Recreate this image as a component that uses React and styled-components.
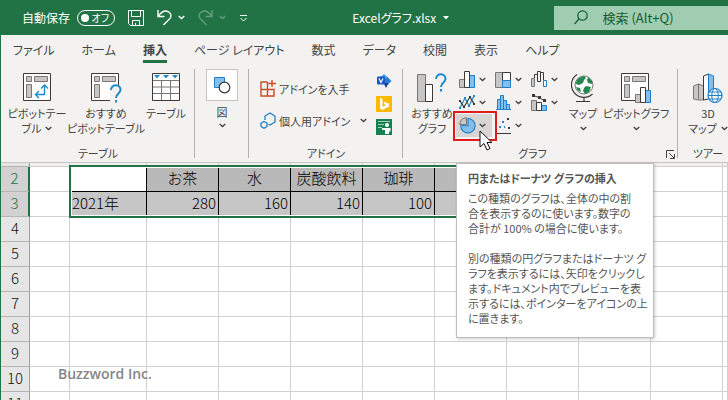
import React from 'react';
import styled, { createGlobalStyle, css } from 'styled-components';

const GlobalStyle = createGlobalStyle`
  * {
    box-sizing: border-box;
  }
  body {
    margin: 0;
    background: #fff;
    color: #444;
    font-family: 'Noto Sans CJK JP', sans-serif;
    font-feature-settings: 'palt';
    font-size: 12px;
    overflow: hidden;
  }
  button, input {
    font: inherit;
    font-feature-settings: inherit;
    color: inherit;
    background: none;
    border: 0;
    padding: 0;
    margin: 0;
  }
`;

const Janela = styled.div`
  position: relative;
  min-height: 100vh;
  overflow: hidden;
  border-left: 1px solid #217346;
`;

// [Title bar]
const TitleBar = styled.header`
  display: flex;
  align-items: center;
  height: 35px;
  background: #217346;
  color: #fff;
`;

const QuickAccess = styled.div`
  display: flex;
  align-items: center;
  padding-left: 21px;
`;

const AutoSave = styled.button`
  display: flex;
  align-items: center;
  gap: 7px;
  margin-right: 13px;
`;

const Toggle = styled.span`
  display: flex;
  align-items: center;
  justify-content: space-between;
  width: 38px;
  height: 16px;
  padding: 0 5px 0 3px;
  border: 1px solid #fff;
  border-radius: 8px;
  font-size: 10px;
  line-height: 14px;
  &::before {
    display: block;
    content: '';
    width: 8px;
    height: 8px;
    border-radius: 50%;
    background: #fff;
  }
`;

const QuickButton = styled.button`
  display: flex;
  align-items: center;
  gap: 6px;
  margin-right: 13px;
  opacity: ${({ disabled }) => (disabled ? 0.3 : 1)};
`;

const FileName = styled.button`
  flex: 1;
  display: flex;
  align-items: center;
  justify-content: center;
  gap: 7px;
`;

const Search = styled.label`
  display: flex;
  align-items: center;
  gap: 15px;
  width: 24%;
  height: 24px;
  padding-left: 20px;
  background: #a0cdb2;
  color: #135c32;
`;

const SearchInput = styled.input`
  flex: 1;
  min-width: 0;
  outline: 0;
  font-size: 13px;
  &::placeholder {
    color: #135c32;
    opacity: 1;
  }
`;

// [Tabs]
const Tabs = styled.nav`
  display: flex;
  gap: 27px;
  height: 28px;
  padding-left: 12px;
  background: #f3f2f1;
`;

const Tab = styled.button`
  height: 28px;
  padding-top: 5px;
  font-size: 12px;
  line-height: 20px;
  white-space: nowrap;
  border-bottom: 3px solid transparent;
  ${({ $ativo }) =>
    $ativo &&
    css`
      font-weight: bold;
      border-bottom-color: #217346;
    `}
`;

// [Ribbon]
const RibbonBar = styled.section`
  display: flex;
  height: 100px;
  background: #f3f2f1;
  border-bottom: 1px solid #c8c6c4;
  font-size: 11px;
`;

const Group = styled.div`
  position: relative;
  flex: ${({ $grow }) => ($grow ? 1 : 'none')};
  display: flex;
  flex-direction: column;
  justify-content: space-between;
  width: ${({ $width }) => $width}px;
  &::after {
    display: ${({ $grow }) => ($grow ? 'none' : 'block')};
    content: '';
    position: absolute;
    top: 6px;
    right: 0;
    width: 1px;
    height: 89px;
    background: #b3b0ad;
  }
`;

const GroupBody = styled.div`
  display: flex;
  align-items: flex-start;
  padding-left: ${({ $left }) => $left || 0}px;
`;

const GroupTitle = styled.div`
  display: flex;
  justify-content: center;
  line-height: 15px;
  padding-right: ${({ $right }) => $right || 0}px;
  padding-bottom: 1px;
`;

const Launcher = styled.button`
  position: absolute;
  right: 3px;
  bottom: 3px;
  display: flex;
`;

const BigButton = styled.button`
  display: flex;
  flex-direction: column;
  align-items: center;
  flex: none;
  width: ${({ $width }) => $width}px;
  padding-top: 10px;
  line-height: 15px;
  white-space: nowrap;
`;

const BigIcon = styled.span`
  display: flex;
  height: 28px;
  margin-bottom: 5px;
`;

const LabelLine = styled.span`
  display: flex;
  align-items: center;
  justify-content: center;
  gap: 4px;
  height: 15px;
`;

const ShapeButton = styled.button`
  display: flex;
  flex-direction: column;
  align-items: center;
  gap: 3px;
  flex: 1;
  padding-top: 6px;
  line-height: 16px;
`;

const Thumb = styled.span`
  display: flex;
  align-items: center;
  justify-content: center;
  width: 32px;
  height: 32px;
  background: #fff;
  border: 1px solid #c8c6c4;
`;

const AddinList = styled.div`
  display: flex;
  flex-direction: column;
  gap: 15px;
  width: 107px;
  padding-top: 17px;
`;

const AddinButton = styled.button`
  display: flex;
  align-items: center;
  gap: 3px;
  height: 17px;
  white-space: nowrap;
`;

const AddinName = styled.span`
  flex: 1;
  text-align: left;
`;

const Stack = styled.div`
  display: flex;
  flex-direction: column;
  gap: 7px;
  padding: 10px 0 0 9px;
`;

const SmallIconButton = styled.button`
  display: flex;
`;

const ChartGrid = styled.div`
  display: grid;
  grid-template-columns: repeat(3, 36px);
  grid-auto-rows: 23px;
  padding-top: 5px;
`;

const ChartButton = styled.button`
  position: relative;
  display: flex;
  align-items: center;
  gap: 3px;
  padding-left: 3px;
  ${({ $ativo }) =>
    $ativo &&
    css`
      background: #d8d6d4;
      &::after {
        content: '';
        position: absolute;
        z-index: 1;
        inset: -3px -5px -4px -3px;
        border: 2px solid #e01b1b;
      }
    `}
`;

const Cursor = styled.svg`
  position: absolute;
  z-index: 2;
  left: 23px;
  top: 16px;
`;

// [Sheet]
const Sheet = styled.main`
  position: relative;
`;

const Grid = styled.table`
  width: 100%;
  table-layout: fixed;
  border-collapse: separate;
  border-spacing: 0;
  font-size: 15px;
  font-weight: 300;
  line-height: 22px;
  color: #000;
`;

const Col = styled.col`
  width: ${({ $width }) => ($width ? `${$width}px` : 'auto')};
`;

const Row = styled.tr`
  height: ${({ $first }) => ($first ? 4 : 25)}px;
  background: ${({ $first }) => ($first ? '#f0f0ef' : '#fff')};
`;

const RowHead = styled.th`
  padding: 0 0 2px;
  font-weight: inherit;
  background: ${({ $ativo }) => ($ativo ? '#d2d2d2' : '#e6e6e6')};
  color: ${({ $ativo }) => ($ativo ? '#217346' : '#111')};
  border-bottom: 1px solid #b5b5b5;
  border-right: ${({ $ativo }) => ($ativo ? '2px solid #217346' : '1px solid #9f9f9f')};
  ${Row}:first-child & {
    padding: 0;
  }
`;

const Cell = styled.td`
  padding: 0 2px 2px;
  overflow: hidden;
  white-space: nowrap;
  text-align: ${({ $align }) => $align || 'left'};
  border-right: 1px solid #d0d0d0;
  border-bottom: 1px solid #d0d0d0;
  ${({ $fill }) =>
    $fill &&
    css`
      background: ${$fill};
      border-color: #000;
    `}
`;

const Selection = styled.div`
  position: absolute;
  top: 2px;
  left: 68px;
  width: 439px;
  height: 53px;
  border: 2px solid #217346;
  box-shadow: inset 0 0 0 1px #fff;
`;

const Tooltip = styled.div`
  position: absolute;
  z-index: 3;
  top: 0;
  left: 455px;
  width: 198px;
  padding: 7px 0 11px 11px;
  background: #fff;
  border: 1px solid #bebebe;
  box-shadow: 1px 1px 3px rgba(0, 0, 0, 0.2);
  color: #555;
  font-size: 11px;
  line-height: 15px;
  white-space: nowrap;
`;

const TooltipTitle = styled.strong`
  display: block;
  margin-bottom: 5px;
`;

const TooltipText = styled.p`
  margin: 0 0 15px;
  &:last-child {
    margin: 0;
  }
`;

const Watermark = styled.div`
  position: absolute;
  top: 202px;
  left: 57px;
  font: 600 14px/18px 'Open Sans', sans-serif;
  color: #858585;
`;

// [Icons]
const Caret = () => (
  <svg width="7" height="5" viewBox="0 0 7 5" fill="none" stroke="currentColor" strokeWidth="1.3">
    <path d="M.7 1l2.8 2.6L6.3 1" />
  </svg>
);

const SaveIcon = () => (
  <svg width="16" height="16" viewBox="0 0 16 16" fill="none" stroke="#fff">
    <path d="M.5.5h15v15H2.500l-2-2zM3.500.5v6h9v-6M4.500 15.500v-5h7v5M7.500 13v2.500" />
  </svg>
);

const UndoIcon = ({ flip }) => (
  <svg width="15" height="17" viewBox="0 0 15 17" fill="none" stroke="#fff" strokeWidth="1.4">
    <path
      transform={flip ? 'translate(15 0) scale(-1 1)' : undefined}
      d="M1 1v6.500h6.500M1.500 7C4 3.500 7 1.500 10 2.200c3.500.8 5 4.300 3 7.200L6.500 16"
    />
  </svg>
);

const PivotFrame = () => (
  <>
    <path d="M.5.5h27v27H.5z" fill="#fff" stroke="#3b3a39" />
    <path d="M3.500 3.500h5v5h-5zM11.500 3.500h13v5h-13zM3.500 11.500h5v13h-5z" fill="#c8c6c4" stroke="#797775" />
  </>
);

const PivotIcon = () => (
  <svg width="28" height="28" viewBox="0 0 28 28" fill="none">
    <PivotFrame />
    <path d="M12.500 21.500h9v-9M16 18l-3.500 3.500L16 25M18 15.500l3.500-3.500 3.500 3.500" stroke="#1e8bcd" strokeWidth="1.4" />
  </svg>
);

const QuestionMark = () => (
  <g stroke="#1e8bcd" strokeWidth="2">
    <path d="M0 5c0-6.500 10-6 9.500 0C9.300 8.500 5 8.500 5 13" />
    <path d="M5 15v2.500" />
  </g>
);

const PivotSuggestIcon = () => (
  <svg width="31" height="30" viewBox="0 0 31 30" fill="none">
    <PivotFrame />
    <path d="M19 12h9v16h-9z" fill="#f3f2f1" />
    <g transform="translate(20 12)">
      <QuestionMark />
    </g>
  </svg>
);

const TableIcon = () => (
  <svg width="28" height="28" viewBox="0 0 28 28" fill="none">
    <path d="M.5.5h27v27H.5z" fill="#fff" />
    <path d="M9.500 7v20M18.500 7v20M1 7.500h26M1 14h26M1 20.500h26" stroke="#797775" />
    <path d="M.5.5h27v27H.5z" stroke="#3b3a39" />
    <path d="M2 2h6L5 5.500zM11 2h6l-3 3.500zM20 2h6l-3 3.500z" fill="#1e8bcd" />
  </svg>
);

const ShapesIcon = () => (
  <svg width="18" height="18" viewBox="0 0 18 18">
    <path d="M1.500 1.500h10v10h-10z" fill="#83beec" stroke="#1e7fc8" />
    <circle cx="11.500" cy="11.500" r="5.300" fill="#fff" stroke="#3b3a39" strokeWidth="1.2" />
  </svg>
);

const StoreIcon = () => (
  <svg width="16" height="17" viewBox="0 0 16 17" fill="none" stroke="#d04a20" strokeWidth="1.4">
    <path d="M7.500 2H1v14h13V9.500H1M7.500 2v14M12 0v7M8.500 3.500H16" />
  </svg>
);

const MyAddinsIcon = () => (
  <svg width="16" height="17" viewBox="0 0 16 17" fill="none" stroke="#1e7fc8" strokeWidth="1.3">
    <path d="M5 8V4l5-3 5 3v6l-5 3-1.500-.8" />
    <path d="M4 9.500l3 1.700v3.300l-3 1.800-3-1.800v-3.300z" />
  </svg>
);

const VisioIcon = () => (
  <svg width="16" height="16" viewBox="0 0 16 16">
    <path d="M8 1l4 3.500-4 4-4-4z" fill="#41a5ee" />
    <path d="M11.500 4l4 4-4 4-4-4z" fill="#2b7cd3" />
    <path d="M7.500 10h5l-2.500 5z" fill="#103f91" />
    <rect x="1" y="3.500" width="8" height="8" rx="1" fill="#185abd" />
    <path d="M3 5.500l2 4 2-4" fill="none" stroke="#fff" strokeWidth="1.2" />
  </svg>
);

const BingIcon = () => (
  <svg width="16" height="16" viewBox="0 0 16 16">
    <path d="M0 0h16v16H0z" fill="#ffb900" />
    <path d="M4 2l2.500 1v8L13 7.500v3L6.500 14 4 12.500z" fill="#fff" />
    <path d="M7.500 5.500L13 7.800v2.500L9 9z" fill="#fff" />
  </svg>
);

const PeopleIcon = () => (
  <svg width="16" height="16" viewBox="0 0 16 16">
    <path d="M0 0h16v16H0z" fill="#168150" />
    <path d="M2 2.500h12M2 5.500h6M2 8.500h4" stroke="#9bd0b5" />
    <circle cx="11" cy="6" r="2" fill="#fff" />
    <path d="M6 9h8.500v3.500h-1.500V15H9v-4H6z" fill="#fff" />
  </svg>
);

const ChartSuggestIcon = () => (
  <svg width="30" height="30" viewBox="0 0 30 30" fill="none">
    <path d="M.5 1.500H8.500v27H.5z" fill="#c8c6c4" stroke="#797775" />
    <path d="M8.500 11.500h7v17h-7z" fill="#fff" stroke="#3b3a39" />
    <g transform="translate(19 1)">
      <QuestionMark />
    </g>
  </svg>
);

const BarIcon = () => (
  <svg width="17" height="17" viewBox="0 0 17 17">
    <path d="M.5 8.500h5v8h-5z" fill="#c8c6c4" stroke="#797775" />
    <path d="M10.500 4.500h5v12h-5z" fill="#83beec" stroke="#1e7fc8" />
    <path d="M5.500.5h5v16h-5z" fill="#fff" stroke="#3b3a39" />
  </svg>
);

const TreeIcon = () => (
  <svg width="17" height="17" viewBox="0 0 17 17">
    <path d="M.5 1.500h7v15h-7z" fill="#c8c6c4" stroke="#797775" />
    <path d="M7.500 1.500h8v8h-8z" fill="#fff" stroke="#3b3a39" />
    <path d="M7.500 9.500h8v7h-8z" fill="#83beec" stroke="#1e7fc8" />
  </svg>
);

const WaterfallIcon = () => (
  <svg width="17" height="17" viewBox="0 0 17 17">
    <path d="M.5 7.500h3v8h-3z" fill="#c8c6c4" stroke="#797775" />
    <path d="M3.500 7V3.500h3M6.500.5h3v10h-3zM9.500 1.500h3v8" fill="none" stroke="#3b3a39" />
    <path d="M12.500 9.500h3v6h-3z" fill="#fff" stroke="#1e7fc8" />
  </svg>
);

const LineIcon = () => (
  <svg width="17" height="17" viewBox="0 0 17 17" fill="none">
    <path d="M1 14L6 4l4 8 5-10" stroke="#1e8bcd" strokeWidth="1.2" />
    <path d="M1 7l4 6 6-10 4 7" stroke="#3b3a39" strokeWidth="1.2" />
    <path d="M0 6h2v2H0zM4 12h2v2H4zM10 2h2v2h-2zM14 9h2v2h-2z" fill="#3b3a39" />
    <path d="M0 13h2v2H0zM5 3h2v2H5zM9 11h2v2H9zM14 1h2v2h-2z" fill="#1e8bcd" />
  </svg>
);

const HistogramIcon = () => (
  <svg width="17" height="17" viewBox="0 0 17 17">
    <path d="M2.500 5.500h3v10h-3zM5.500 1.500h3v14h-3zM8.500 6.500h3v9h-3zM11.500 10.500h3v5h-3z" fill="#83beec" stroke="#1e7fc8" />
    <path d="M1 15.500h15" stroke="#1e7fc8" />
  </svg>
);

const ComboIcon = () => (
  <svg width="17" height="17" viewBox="0 0 17 17">
    <path d="M.5 6.500h5v10h-5z" fill="#c8c6c4" stroke="#797775" />
    <path d="M10.500 11.500h5v5h-5z" fill="#83beec" stroke="#1e7fc8" />
    <path d="M5.500 8.500h5v8h-5z" fill="#fff" stroke="#3b3a39" />
    <path d="M2 1.500l6 2 5 3" fill="none" stroke="#3b3a39" />
    <path d="M1 0h3v3H1zM7 2h3v3H7zM12 5h3v3h-3z" fill="#3b3a39" />
  </svg>
);

const PieIcon = () => (
  <svg width="17" height="17" viewBox="0 0 17 17">
    <path d="M9 1.500a7.200 7.200 0 1 1-7.300 7.200H9z" fill="#83beec" stroke="#1e7fc8" strokeWidth="1.100" />
    <path d="M7.500 7.500H.7A6.800 6.800 0 0 1 7.500.7z" fill="#c8c6c4" stroke="#797775" />
  </svg>
);

const ScatterIcon = () => (
  <svg width="17" height="17" viewBox="0 0 17 17">
    <path d="M1 1v15.500h15" fill="none" stroke="#3b3a39" />
    <path d="M7 4h2v2H7zM4 9h2v2H4zM9 9h1v2H9z" fill="#1e8bcd" />
    <path d="M12 1h2v2h-2zM13 10h2v2h-2z" fill="#3b3a39" />
  </svg>
);

const GlobeIcon = () => (
  <svg width="24" height="30" viewBox="0 0 24 30" fill="none">
    <circle cx="13" cy="12" r="9" fill="#fff" stroke="#797775" />
    <path
      d="M8 5l5-2 2 2-2 2-1 3-4 2-3-1c0-3 1-5 3-6zM17 4l4 4v3l-4-1-1-3zM15 13l5 1-2 5-4 2-2-3 1-3zM5 14l4 1 1 4c-3-1-4-2-5-5z"
      fill="#21874f"
    />
    <path d="M6 1.500A12.500 12.500 0 1 0 21.500 21M13 25v3.500M5 28.500h14" stroke="#3b3a39" strokeWidth="1.2" />
  </svg>
);

const PivotChartIcon = () => (
  <svg width="31" height="31" viewBox="0 0 31 31" fill="none">
    <PivotFrame />
    <path d="M14.500 21.500h5v8h-5z" fill="#c8c6c4" stroke="#797775" />
    <path d="M24.500 17.500h5v12h-5z" fill="#83beec" stroke="#1e7fc8" />
    <path d="M19.500 14.500h5v15h-5z" fill="#fff" stroke="#3b3a39" />
  </svg>
);

const Map3DIcon = () => (
  <svg width="30" height="31" viewBox="0 0 30 31" fill="none">
    <path d="M.5 13l5-2 5 2v14h-5l-5-1z" fill="#c8c6c4" stroke="#797775" />
    <path d="M5.500 11v15" stroke="#797775" />
    <path d="M10.500 3l5-2v25l-5 1z" fill="#fff" stroke="#3b3a39" />
    <path d="M15.500 1l5 2v23h-5z" fill="#83beec" stroke="#1e7fc8" />
    <circle cx="22" cy="22.500" r="7" fill="#fff" stroke="#1e7fc8" strokeWidth="1.2" />
    <ellipse cx="22" cy="22.500" rx="3.200" ry="7" stroke="#1e7fc8" />
    <path d="M15 22.500h14M16 19h12M16 26h12" stroke="#1e7fc8" />
  </svg>
);

const tabs = ['ファイル', 'ホーム', '挿入', 'ページ レイアウト', '数式', 'データ', '校閲', '表示', 'ヘルプ'];

const charts = [
  ['縦棒グラフ', BarIcon],
  ['階層構造', TreeIcon],
  ['ウォーターフォール', WaterfallIcon],
  ['折れ線', LineIcon],
  ['統計', HistogramIcon],
  ['組み合わせ', ComboIcon],
  ['円またはドーナツ グラフの挿入', PieIcon],
  ['散布図', ScatterIcon],
];

const columns = [29, 40, 77, 72, 72, 72, 72, 72, 72, 72, 72, null];

const data = {
  2: ['', 'お茶', '水', '炭酸飲料', '珈琲', ''],
  3: ['2021年', '280', '160', '140', '100', ''],
};

const rows = [1, 2, 3, 4, 5, 6, 7, 8, 9, 10, 11];

const cellProps = (row, i) => {
  if (row === 2) return { $fill: i === 0 ? '#fff' : '#b9b9b9', $align: 'center' };
  return { $fill: '#c6c6c6', $align: i === 0 ? 'left' : 'right' };
};

const Big = ({ width, icon, lines, caret }) => (
  <BigButton $width={width}>
    <BigIcon>{icon}</BigIcon>
    {lines.map((line, i) => (
      <LabelLine key={i}>
        {line}
        {caret && i === lines.length - 1 && <Caret />}
      </LabelLine>
    ))}
  </BigButton>
);

const Ribbon = () => (
  <RibbonBar>
    <Group $width={194}>
      <GroupBody $left={4}>
        <Big width={64} icon={<PivotIcon />} lines={['ピボットテー', 'ブル']} caret />
        <Big width={74} icon={<PivotSuggestIcon />} lines={['おすすめ', 'ピボットテーブル']} />
        <Big width={46} icon={<TableIcon />} lines={['テーブル']} />
      </GroupBody>
      <GroupTitle>テーブル</GroupTitle>
    </Group>
    <Group $width={54}>
      <GroupBody>
        <ShapeButton>
          <Thumb>
            <ShapesIcon />
          </Thumb>
          図
          <Caret />
        </ShapeButton>
      </GroupBody>
    </Group>
    <Group $width={154}>
      <GroupBody $left={11}>
        <AddinList>
          <AddinButton>
            <StoreIcon />
            <AddinName>アドインを入手</AddinName>
          </AddinButton>
          <AddinButton>
            <MyAddinsIcon />
            <AddinName>個人用アドイン</AddinName>
            <Caret />
          </AddinButton>
        </AddinList>
        <Stack>
          <SmallIconButton aria-label="Visio">
            <VisioIcon />
          </SmallIconButton>
          <SmallIconButton aria-label="Bing">
            <BingIcon />
          </SmallIconButton>
          <SmallIconButton aria-label="People Graph">
            <PeopleIcon />
          </SmallIconButton>
        </Stack>
      </GroupBody>
      <GroupTitle>アドイン</GroupTitle>
    </Group>
    <Group $width={275}>
      <GroupBody $left={5}>
        <Big width={48} icon={<ChartSuggestIcon />} lines={['おすすめ', 'グラフ']} />
        <ChartGrid>
          {charts.map(([name, Icon]) => (
            <ChartButton key={name} aria-label={name} $ativo={Icon === PieIcon}>
              <Icon />
              <Caret />
              {Icon === PieIcon && (
                <Cursor width="14" height="21" viewBox="0 0 14 21">
                  <path d="M1 1v16l4-3.500 3 6.500 3-1.500L8 12.500h5z" fill="#fff" stroke="#111" />
                </Cursor>
              )}
            </ChartButton>
          ))}
        </ChartGrid>
        <Big width={38} icon={<GlobeIcon />} lines={['マップ', '']} caret />
        <Big width={68} icon={<PivotChartIcon />} lines={['ピボットグラフ', '']} caret />
      </GroupBody>
      <GroupTitle $right={16}>グラフ</GroupTitle>
      <Launcher aria-label="グラフの設定">
        <svg width="9" height="9" viewBox="0 0 9 9" fill="none" stroke="#444">
          <path d="M.5 8V.5H8M3 3l5 5M8.500 4v4.500H4" />
        </svg>
      </Launcher>
    </Group>
    <Group $grow>
      <GroupBody>
        <Big width={60} icon={<Map3DIcon />} lines={['3D', 'マップ']} caret />
      </GroupBody>
      <GroupTitle>ツアー</GroupTitle>
    </Group>
  </RibbonBar>
);

const App = () => {
  const [ativo, setAtivo] = React.useState('挿入');

  return (
    <>
      <GlobalStyle />
      <Janela>
        <TitleBar>
          <QuickAccess>
            <AutoSave>
              自動保存
              <Toggle>オフ</Toggle>
            </AutoSave>
            <QuickButton aria-label="上書き保存">
              <SaveIcon />
            </QuickButton>
            <QuickButton aria-label="元に戻す">
              <UndoIcon />
              <Caret />
            </QuickButton>
            <QuickButton aria-label="やり直し" disabled>
              <UndoIcon flip />
              <Caret />
            </QuickButton>
            <button aria-label="カスタマイズ">
              <svg width="9" height="8" viewBox="0 0 9 8" fill="none" stroke="#fff">
                <path d="M1 .5h7M1.500 3l3 3 3-3" />
              </svg>
            </button>
          </QuickAccess>
          <FileName>
            Excelグラフ.xlsx
            <svg width="6" height="4" viewBox="0 0 6 4">
              <path d="M0 0h6L3 3.500z" fill="#fff" />
            </svg>
          </FileName>
          <Search>
            <svg width="14" height="15" viewBox="0 0 14 15" fill="none" stroke="#135c32" strokeWidth="1.2">
              <circle cx="8.500" cy="5.500" r="4.700" />
              <path d="M5 9l-4.500 5" />
            </svg>
            <SearchInput aria-label="検索" placeholder="検索 (Alt+Q)" />
          </Search>
        </TitleBar>
        <Tabs>
          {tabs.map((tab) => (
            <Tab key={tab} $ativo={ativo === tab} onClick={() => setAtivo(tab)}>
              {tab}
            </Tab>
          ))}
        </Tabs>
        <Ribbon />
        <Sheet>
          <Grid>
            <colgroup>
              {columns.map((width, i) => (
                <Col key={i} $width={width} />
              ))}
            </colgroup>
            <tbody>
              {rows.map((row) => (
                <Row key={row} $first={row === 1}>
                  <RowHead $ativo={row === 2 || row === 3}>{row > 1 && row}</RowHead>
                  <Cell />
                  {columns.slice(2).map((_, i) => {
                    const filled = data[row] && i < data[row].length;
                    return (
                      <Cell key={i} {...(filled ? cellProps(row, i) : {})}>
                        {filled && data[row][i]}
                      </Cell>
                    );
                  })}
                </Row>
              ))}
            </tbody>
          </Grid>
          <Selection />
          <Tooltip role="tooltip">
            <TooltipTitle>円またはドーナツ グラフの挿入</TooltipTitle>
            <TooltipText>
              この種類のグラフは、全体の中の割
              <br />
              合を表示するのに使います。数字の
              <br />
              合計が 100% の場合に使います。
            </TooltipText>
            <TooltipText>
              別の種類の円グラフまたはドーナツ グ
              <br />
              ラフを表示するには、矢印をクリックし
              <br />
              ます。ドキュメント内でプレビューを表
              <br />
              示するには、ポインターをアイコンの上
              <br />
              に置きます。
            </TooltipText>
          </Tooltip>
          <Watermark>Buzzword Inc.</Watermark>
        </Sheet>
      </Janela>
    </>
  );
};

export default App;
